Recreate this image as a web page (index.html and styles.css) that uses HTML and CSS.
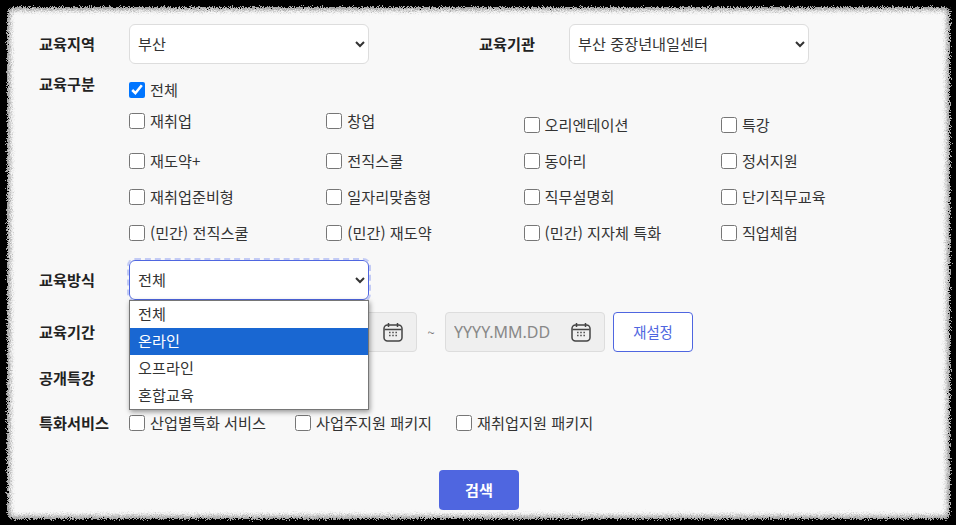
FILE: index.html
```html
<!DOCTYPE html>
<html lang="ko">
<head>
<meta charset="utf-8">
<title>교육 검색</title>
<link rel="stylesheet" href="styles.css">
</head>
<body>
<svg class="defs" aria-hidden="true">
  <defs>
    <filter id="rough" x="-2%" y="-2%" width="104%" height="104%">
      <feTurbulence type="fractalNoise" baseFrequency="1.1" numOctaves="3" seed="4" result="n"/>
      <feDisplacementMap in="SourceGraphic" in2="n" scale="8" xChannelSelector="R" yChannelSelector="G"/>
    </filter>
    <symbol id="cal" viewBox="0 0 20 20">
      <rect x="1" y="3" width="18" height="16" rx="3.5" fill="none" stroke="#444" stroke-width="1.5"/>
      <path d="M1.5 7.5h17M5.5 1v4M14.5 1v4" fill="none" stroke="#444" stroke-width="1.5"/>
      <path d="M6 10.5h1.6M9.2 10.5h1.6M12.4 10.5H14M6 13.5h1.6M9.2 13.5h1.6M12.4 13.5H14" fill="none" stroke="#555" stroke-width="1.5"/>
    </symbol>
  </defs>
</svg>
<main class="panel">
  <div class="panel-bg"></div>
  <form class="form">
    <div class="row row-top">
      <span class="label">교육지역</span>
      <select class="select"><option>부산</option></select>
      <span class="label label-second">교육기관</span>
      <select class="select"><option>부산 중장년내일센터</option></select>
    </div>

    <div class="row row-types">
      <span class="label label-types">교육구분</span>
      <div class="types">
        <label class="check check-all"><input type="checkbox" checked>전체</label>
        <div class="type-grid">
          <label class="check"><input type="checkbox">재취업</label>
          <label class="check"><input type="checkbox">창업</label>
          <label class="check check-low"><input type="checkbox">오리엔테이션</label>
          <label class="check check-low"><input type="checkbox">특강</label>
          <label class="check"><input type="checkbox">재도약+</label>
          <label class="check"><input type="checkbox">전직스쿨</label>
          <label class="check"><input type="checkbox">동아리</label>
          <label class="check"><input type="checkbox">정서지원</label>
          <label class="check"><input type="checkbox">재취업준비형</label>
          <label class="check"><input type="checkbox">일자리맞춤형</label>
          <label class="check"><input type="checkbox">직무설명회</label>
          <label class="check"><input type="checkbox">단기직무교육</label>
          <label class="check"><input type="checkbox">(민간) 전직스쿨</label>
          <label class="check"><input type="checkbox">(민간) 재도약</label>
          <label class="check"><input type="checkbox">(민간) 지자체 특화</label>
          <label class="check"><input type="checkbox">직업체험</label>
        </div>
      </div>
    </div>

    <div class="row row-method">
      <span class="label">교육방식</span>
      <div class="method">
        <select class="select select-open"><option>전체</option></select>
        <ul class="menu">
          <li>전체</li>
          <li class="menu-active">온라인</li>
          <li>오프라인</li>
          <li>혼합교육</li>
        </ul>
      </div>
    </div>

    <div class="row row-period">
      <span class="label">교육기간</span>
      <div class="period-spacer"></div>
      <div class="date"><input class="date-input" placeholder="YYYY.MM.DD" disabled><svg class="cal"><use href="#cal"/></svg></div>
      <span class="tilde">~</span>
      <div class="date"><input class="date-input" placeholder="YYYY.MM.DD" disabled><svg class="cal"><use href="#cal"/></svg></div>
      <button type="button" class="reset">재설정</button>
    </div>

    <div class="row row-open">
      <span class="label">공개특강</span>
    </div>

    <div class="row row-special">
      <span class="label">특화서비스</span>
      <label class="check check-a"><input type="checkbox">산업별특화 서비스</label>
      <label class="check check-b"><input type="checkbox">사업주지원 패키지</label>
      <label class="check"><input type="checkbox">재취업지원 패키지</label>
    </div>

    <div class="actions">
      <button type="button" class="search">검색</button>
    </div>
  </form>
</main>
</body>
</html>
```

FILE: styles.css
```css
* { box-sizing: border-box; }
html, body { margin: 0; height: 100%; }
body {
  background: #000;
  overflow: hidden;
  font-family: "Noto Sans CJK KR", "Noto Sans", sans-serif;
  font-size: 15.2px;
  color: #333;
}
.defs { position: absolute; width: 0; height: 0; }
.panel {
  position: relative;
  width: 943px;
  height: 512px;
  margin: 7px;
}
.panel-bg {
  position: absolute;
  inset: 0;
  background: #f8f8f8;
  border-radius: 6px;
  box-shadow: inset 0 0 4px 3px #999;
  filter: url(#rough);
}
.form {
  position: relative;
  padding: 17px 0 0 32px;
}
.row { display: flex; align-items: center; }
.label {
  width: 90px;
  flex: none;
  padding-bottom: 2px;
  font-weight: 700;
  color: #222;
  line-height: 20px;
}
.select {
  width: 240px;
  height: 40px;
  padding: 0 4px 2px;
  background-color: #fff;
  border: 1px solid #ddd;
  border-radius: 6px;
  font: inherit;
  color: #333;
}
.row-top .label-second { margin-left: 110px; }

.row-types { margin-top: 11px; align-items: flex-start; }
.label-types { margin-top: -2px; }
.check {
  display: flex;
  align-items: center;
  height: 20px;
  padding-bottom: 2px;
  line-height: 18px;
  white-space: nowrap;
}
.check input {
  width: 16px;
  height: 16px;
  margin: 2px 5px 0 0;
  accent-color: #0075ff;
}
.types { margin-top: 5px; }
.check-all { margin-bottom: 11px; }
.type-grid {
  display: grid;
  grid-template-columns: repeat(4, 197.3px);
  grid-template-rows: 36px;
  grid-auto-rows: 36px;
  align-items: start;
}
.type-grid .check-low { margin-top: 4px; }
.type-grid > :nth-child(n+5) { margin-top: 4px; }

.row-method { margin-top: 5px; }
.method { position: relative; }
.method .select { display: block; }
.select-open {
  border-color: #4f66e0;
  outline: 2px dashed #c3cbf5;
  outline-offset: 0;
}
.menu {
  position: absolute;
  z-index: 2;
  top: 40px;
  left: 0;
  width: 240px;
  height: 110px;
  margin: 0;
  padding: 0;
  list-style: none;
  background: #fff;
  border: 1px solid #767676;
  box-shadow: 1px 2px 5px rgba(0, 0, 0, .4);
}
.menu li {
  height: 27px;
  line-height: 25px;
  padding-left: 8px;
}
.menu-active { background: #1967d2; color: #fff; }

.row-period { margin-top: 12px; height: 40px; }
.period-spacer { width: 128px; flex: none; }
.date {
  display: flex;
  align-items: center;
  width: 160px;
  height: 40px;
  padding: 0 13px 0 8px;
  background: #efefef;
  border: 1px solid #ddd;
  border-radius: 4px;
}
.date-input {
  flex: 1;
  min-width: 0;
  padding: 0;
  border: 0;
  background: none;
  font: 16px "Noto Sans", sans-serif;
}
.date-input::placeholder { color: #888; opacity: 1; }
.cal { width: 20px; height: 20px; flex: none; }
.tilde { width: 28px; text-align: center; color: #777; font-size: 13px; }
.reset {
  width: 80px;
  height: 40px;
  margin-left: 8px;
  padding: 0 0 2px;
  background: #fff;
  border: 1px solid #4f66e0;
  border-radius: 4px;
  color: #4f66e0;
  font: inherit;
  font-size: 14.4px;
}

.row-open { height: 20px; margin-top: 16px; }
.row-special { margin-top: 25px; height: 20px; }
.check-a { margin-right: 29px; }
.check-b { margin-right: 24px; }

.actions {
  display: flex;
  justify-content: center;
  width: 880px;
  margin-top: 37px;
}
.search {
  width: 80px;
  height: 40px;
  padding: 0 0 2px;
  background: #4f66e0;
  border: 0;
  border-radius: 4px;
  color: #fff;
  font: inherit;
  font-weight: 700;
}
```
